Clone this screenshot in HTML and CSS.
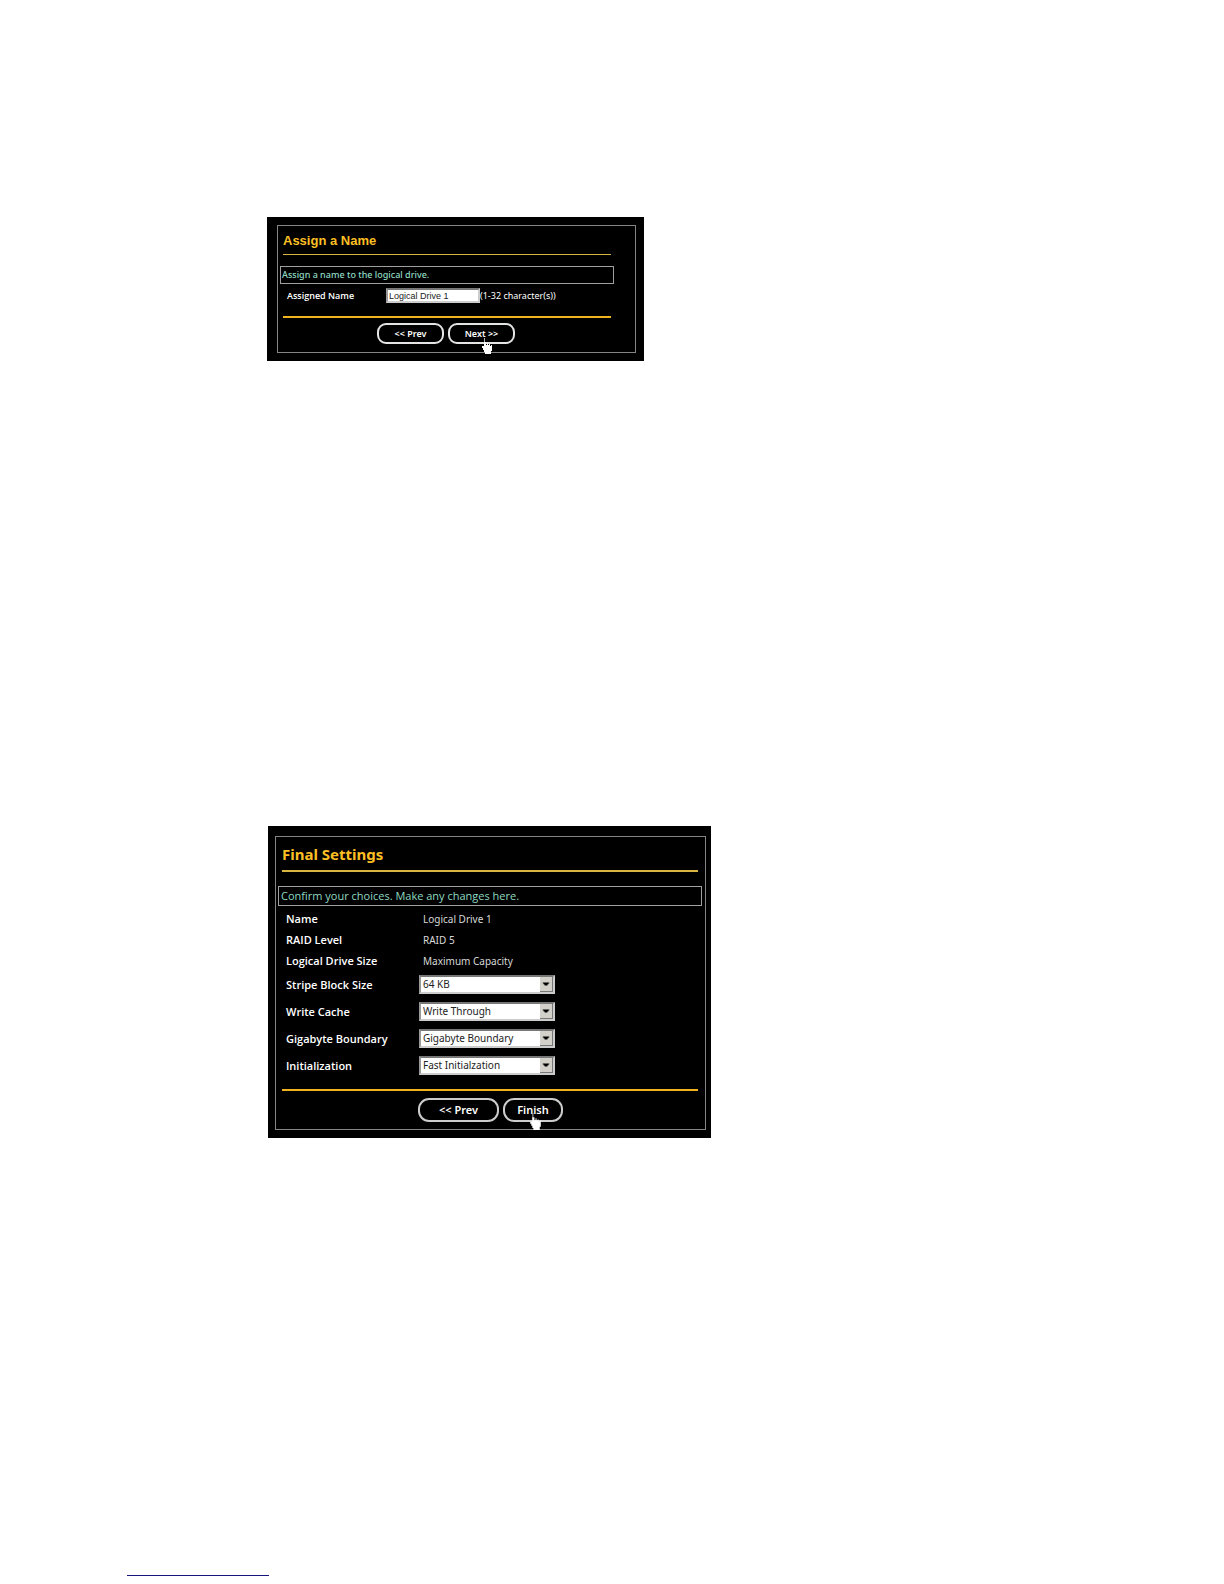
FILE: index.html
```html
<!DOCTYPE html>
<html lang="en">
<head>
<meta charset="utf-8">
<meta name="viewport" content="width=device-width, initial-scale=1">
<title>Logical Drive Wizard</title>
<link rel="stylesheet" href="styles.css">
</head>
<body>
<main class="page">
  <section class="panel panel-name">
    <form class="frame">
      <h2 class="title">Assign a Name</h2>
      <hr class="rule">
      <p class="message">Assign a name to the logical drive.</p>
      <div class="row">
        <label class="label" for="drive-name">Assigned Name</label>
        <div class="entry">
          <input class="textbox" id="drive-name" type="text" value="Logical Drive 1" maxlength="32">
          <span>(1-32 character(s))</span>
        </div>
      </div>
      <hr class="rule rule-thick">
      <div class="actions">
        <button class="button" type="button">&lt;&lt; Prev</button>
        <button class="button" type="button">Next &gt;&gt;
          <svg class="pointer" viewBox="0 0 12 17" aria-hidden="true"><path class="stem" d="M3 1h1v6H3z"/><path d="M3 5h2v3h1V6h1v2h1V7h1v2h1V8h1v6h-1v3H4v-2H3v-2H2v-2H1V9h2z"/></svg>
        </button>
      </div>
    </form>
  </section>

  <section class="panel panel-final">
    <form class="frame">
      <h2 class="title">Final Settings</h2>
      <hr class="rule">
      <p class="message">Confirm your choices. Make any changes here.</p>
      <div class="row"><span class="label">Name</span><span class="value">Logical Drive 1</span></div>
      <div class="row"><span class="label">RAID Level</span><span class="value">RAID 5</span></div>
      <div class="row"><span class="label">Logical Drive Size</span><span class="value">Maximum Capacity</span></div>
      <div class="row row-select">
        <label class="label" for="stripe">Stripe Block Size</label>
        <span class="dropdown"><select id="stripe"><option>64 KB</option></select><svg class="arrow" viewBox="0 0 13 15" aria-hidden="true"><path d="M3 6h7v1H9v1H8v1H5V8H4V7H3z"/></svg></span>
      </div>
      <div class="row row-select">
        <label class="label" for="cache">Write Cache</label>
        <span class="dropdown"><select id="cache"><option>Write Through</option></select><svg class="arrow" viewBox="0 0 13 15" aria-hidden="true"><path d="M3 6h7v1H9v1H8v1H5V8H4V7H3z"/></svg></span>
      </div>
      <div class="row row-select">
        <label class="label" for="boundary">Gigabyte Boundary</label>
        <span class="dropdown"><select id="boundary"><option>Gigabyte Boundary</option></select><svg class="arrow" viewBox="0 0 13 15" aria-hidden="true"><path d="M3 6h7v1H9v1H8v1H5V8H4V7H3z"/></svg></span>
      </div>
      <div class="row row-select">
        <label class="label" for="init">Initialization</label>
        <span class="dropdown"><select id="init"><option>Fast Initialzation</option></select><svg class="arrow" viewBox="0 0 13 15" aria-hidden="true"><path d="M3 6h7v1H9v1H8v1H5V8H4V7H3z"/></svg></span>
      </div>
      <hr class="rule rule-thick">
      <div class="actions">
        <button class="button" type="button">&lt;&lt; Prev</button>
        <button class="button button-finish" type="button">Finish
          <svg class="pointer" viewBox="0 0 12 17" aria-hidden="true"><path class="stem" d="M3 1h1v6H3z"/><path d="M3 5h2v3h1V6h1v2h1V7h1v2h1V8h1v6h-1v3H4v-2H3v-2H2v-2H1V9h2z"/></svg>
        </button>
      </div>
    </form>
  </section>
  <hr class="footer-line">
</main>
</body>
</html>
```
FILE: styles.css
```css
* { box-sizing: border-box; }

body {
  margin: 0;
  background: #fff;
  color: #fff;
  font-family: "Noto Sans", "Open Sans", sans-serif;
}

.page { padding: 217px 24px 8px 127px; }

.panel {
  max-width: 377px;
  margin-left: 140px;
  padding: 8px 8px 8px 10px;
  background: #000;
  font-size: 9px;
  line-height: 12px;
}

.frame {
  padding: 7px 21px 8px 2px;
  border: 1px solid #858585;
}

.title {
  margin: 0 3px;
  color: #fcbf24;
  font-family: "Liberation Sans", sans-serif;
  font-size: 13px;
  line-height: 16px;
}

.rule {
  height: 1px;
  margin: 5px 3px 11px;
  border: 0;
  background: #d9b63f;
}

.rule-thick {
  height: 2px;
  margin: 13px 3px 5px;
  background: #efb320;
}

.message {
  margin: 0;
  padding: 2px 1px;
  border: 1px solid #a0a0a0;
  color: #8fd9c1;
  font-weight: 500;
}

.row {
  display: grid;
  grid-template-columns: 99px 1fr;
  align-items: center;
  padding-left: 7px;
}

.panel-name .row { margin-top: 4px; }

.label {
  font-family: "Open Sans", "Noto Sans", sans-serif;
  font-weight: 600;
}

.entry { display: flex; align-items: center; white-space: nowrap; }

.textbox {
  width: 94px;
  height: 15px;
  padding: 0 1px;
  border: 2px solid #aaa;
  border-color: #777 #ccc #ccc #999;
  border-radius: 0;
  background: #fff;
  color: #222;
  font: 9px "Liberation Sans", sans-serif;
}

.actions {
  display: flex;
  gap: 4px;
  padding-left: 97px;
}

.button {
  position: relative;
  width: 67px;
  height: 21px;
  padding: 0;
  border: 2px solid #e4e4e4;
  border-radius: 9px;
  background: #000;
  color: #fff;
  font: inherit;
  font-weight: 600;
}

.pointer {
  position: absolute;
  top: 12px;
  left: 31px;
  width: 12px;
  height: 17px;
  fill: #fff;
}

.stem { fill: #aaa; }

.panel-final {
  max-width: 443px;
  margin: 465px 0 0 141px;
  padding: 10px 5px 8px 7px;
  font-size: 11px;
  line-height: 16px;
}

.panel-final .frame { padding: 7px 3px 7px 2px; }

.panel-final .title {
  margin: 0 4px;
  font-family: "Noto Sans", sans-serif;
  font-size: 15px;
  line-height: 20px;
}

.panel-final .rule {
  height: 2px;
  margin: 6px 4px 14px;
}

.panel-final .rule-thick { margin: 10px 4px 7px; }

.panel-final .message {
  margin-bottom: 2px;
  padding: 1px 2px;
  font-family: "Open Sans", "Noto Sans", sans-serif;
}

.panel-final .row {
  grid-template-columns: 133px 1fr;
  min-height: 21px;
  padding-left: 8px;
}

.panel-final .row-select { min-height: 27px; }

.value { padding-left: 4px; color: #d8d8d8; font-size: 10px; }

.dropdown {
  display: grid;
  width: 136px;
  height: 19px;
  border: 2px solid #999;
  border-color: #777 #ccc #ccc #999;
  background: #fff;
}

.dropdown select {
  grid-area: 1 / 1;
  padding: 0 14px 0 2px;
  border: 0;
  border-radius: 0;
  background: transparent;
  color: #222;
  font: 10px/15px "Noto Sans", sans-serif;
  appearance: none;
}

.arrow {
  grid-area: 1 / 1;
  justify-self: end;
  width: 13px;
  height: 15px;
  background: #d2d0c9;
  border-right: 1px solid #777;
  border-bottom: 1px solid #777;
  pointer-events: none;
}

.panel-final .actions { padding-left: 140px; }

.panel-final .button {
  width: 81px;
  height: 24px;
  border-color: #ccc;
  border-radius: 11px;
}

.panel-final .button-finish { width: 60px; }

.panel-final .pointer { top: 12px; left: 24px; width: 13px; height: 18px; }

.footer-line {
  width: 142px;
  height: 1px;
  margin: 437px 0 0;
  border: 0;
  background: #16167c;
}
```
